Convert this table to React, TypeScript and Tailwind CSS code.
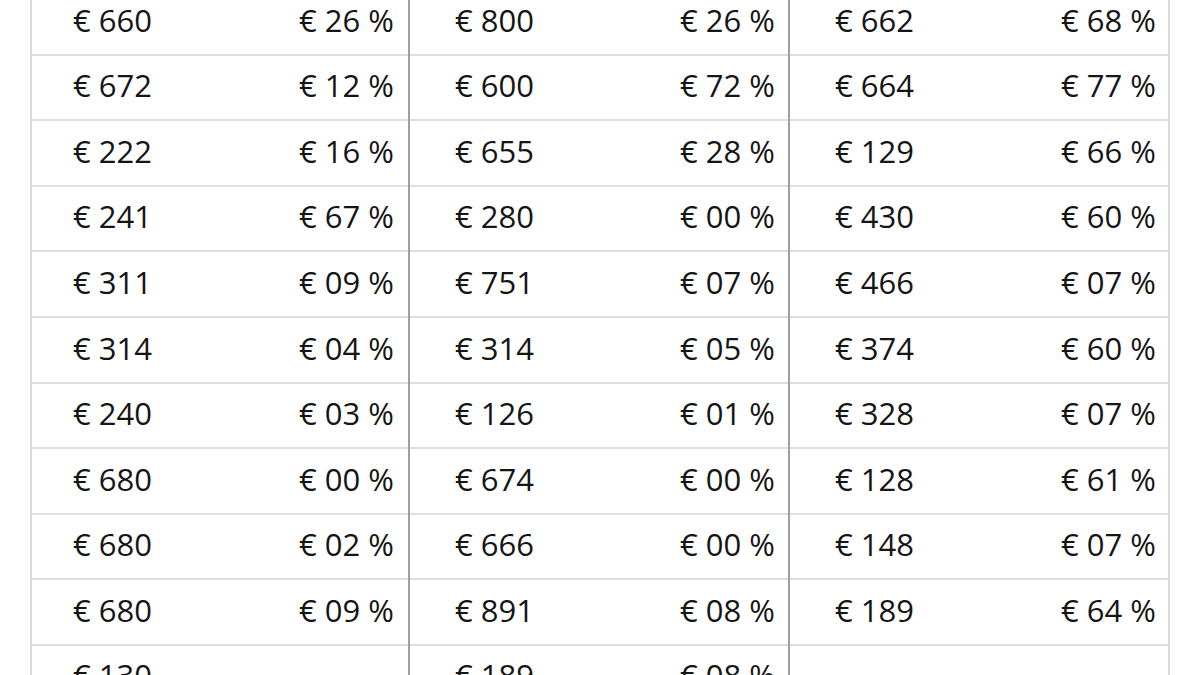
const groups: [string, string | null][][] = [
  [
    ["660", "26"], ["672", "12"], ["222", "16"], ["241", "67"], ["311", "09"],
    ["314", "04"], ["240", "03"], ["680", "00"], ["680", "02"], ["680", "09"], ["130", null],
  ],
  [
    ["800", "26"], ["600", "72"], ["655", "28"], ["280", "00"], ["751", "07"],
    ["314", "05"], ["126", "01"], ["674", "00"], ["666", "00"], ["891", "08"], ["189", "08"],
  ],
  [
    ["662", "68"], ["664", "77"], ["129", "66"], ["430", "60"], ["466", "07"],
    ["374", "60"], ["328", "07"], ["128", "61"], ["148", "07"], ["189", "64"], ["", null],
  ],
];

const borders = [
  "border-l-2 border-l-[#dadada] border-r-2 border-r-[#9f9f9f]",
  "border-r-2 border-r-[#9f9f9f]",
  "border-r-2 border-r-[#dcdcdc]",
];

const pads = ["pl-[41px] pr-[14px]", "pl-[45px] pr-[13px]", "pl-[45px] pr-[12px]"];

export default function App() {
  return (
    <div className="h-[675px] w-[1200px] overflow-hidden bg-white">
      <div
        className="mx-[30px] -mt-[10px] grid grid-cols-3 text-[31px] text-[#151515]"
        style={{ fontFamily: '"Open Sans", "Noto Sans", sans-serif' }}
      >
        {groups.map((rows, gi) => (
          <div key={gi} className={`flex flex-col ${borders[gi]}`}>
            {rows.map(([amount, pct], ri) => (
              <div
                key={ri}
                className={`flex h-[65.6px] shrink-0 items-center justify-between border-b-2 border-[#dedede] ${pads[gi]}`}
              >
                <span className="-mt-[4px]">{amount ? `€ ${amount}` : ""}</span>
                <span className="-mt-[4px]">{pct ? `€ ${pct} %` : ""}</span>
              </div>
            ))}
          </div>
        ))}
      </div>
    </div>
  );
}
